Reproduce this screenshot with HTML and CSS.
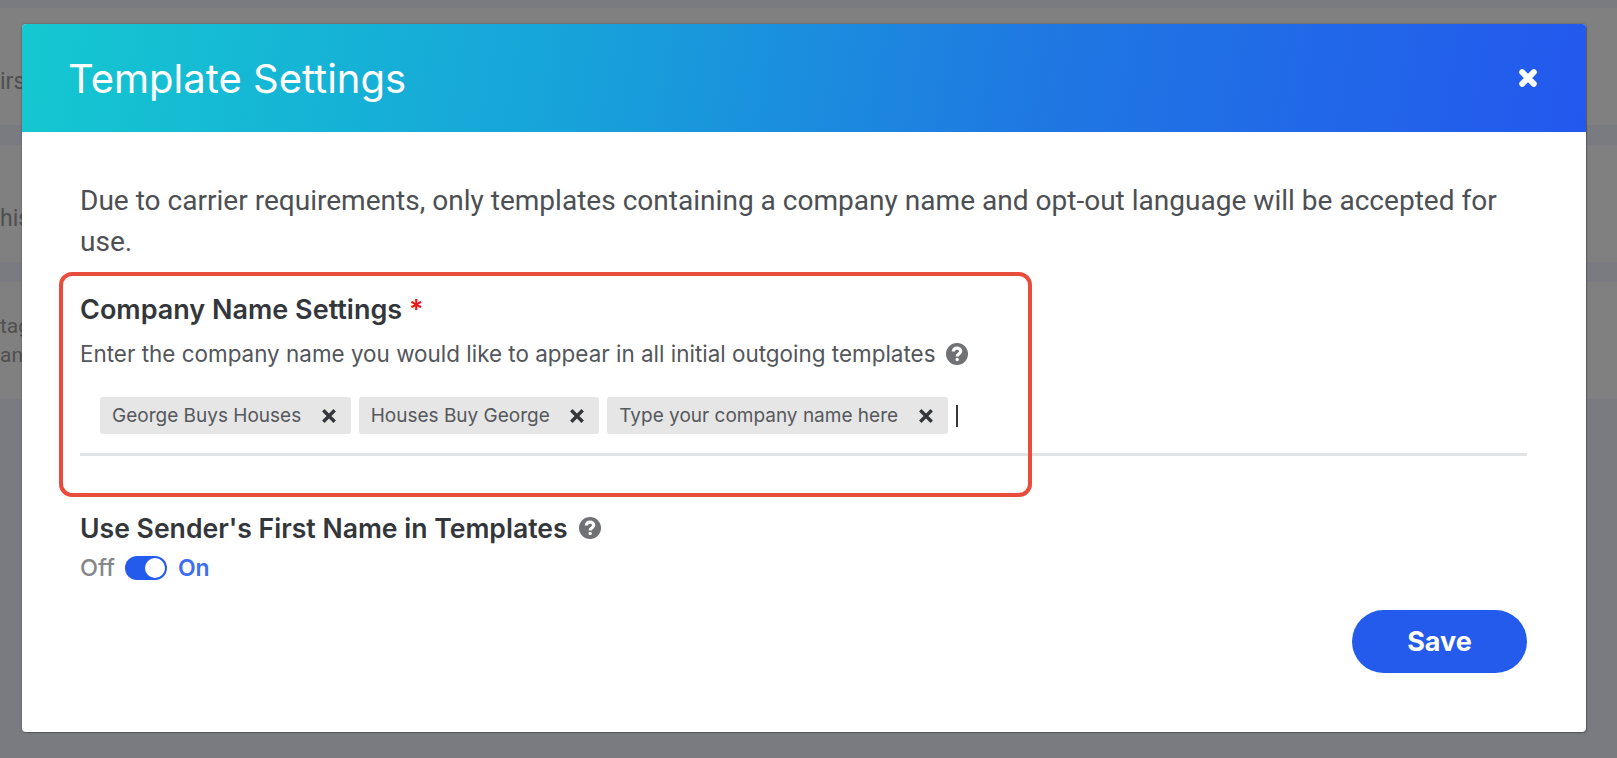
FILE: index.html
```html
<!DOCTYPE html>
<html lang="en">
<head>
<meta charset="utf-8">
<title>Template Settings</title>
<link rel="stylesheet" href="styles.css">
</head>
<body>
<div class="backdrop">
  <div class="bg-row bg-row-low"><span class="bg-text">irs</span></div>
  <div class="bg-row bg-row-low"><span class="bg-text">his</span></div>
  <div class="bg-row"><span class="bg-text bg-text-small">tag<br>any</span></div>
</div>
<div class="modal">
  <header class="modal-head">
    <h1 class="modal-title">Template Settings</h1>
    <svg class="close" viewBox="0 0 20 20" aria-label="Close"><path d="M3.500 3.500 16.500 16.500M16.500 3.500 3.500 16.500" /></svg>
  </header>
  <div class="modal-body">
    <p class="intro">Due to carrier requirements, only templates containing a company name and opt-out language will be accepted for use.</p>
    <section class="company">
      <h2 class="label">Company Name Settings <span class="req">*</span></h2>
      <p class="hint">Enter the company name you would like to appear in all initial outgoing templates
        <svg class="help help-small" viewBox="0 0 24 24"><circle cx="12" cy="12" r="12"/><path class="q" d="M8 9.2C8 6.8 9.8 5.6 12 5.6s4 1.300 4 3.400c0 3-3.800 3-3.800 5.600"/><circle class="dot" cx="12.200" cy="18" r="1.800"/></svg>
      </p>
      <div class="tags">
        <span class="tag">George Buys Houses<svg class="tag-x" viewBox="0 0 14 14"><path d="M2 2 12 12M12 2 2 12"/></svg></span>
        <span class="tag">Houses Buy George<svg class="tag-x" viewBox="0 0 14 14"><path d="M2 2 12 12M12 2 2 12"/></svg></span>
        <span class="tag">Type your company name here<svg class="tag-x" viewBox="0 0 14 14"><path d="M2 2 12 12M12 2 2 12"/></svg></span>
        <span class="caret"></span>
      </div>
    </section>
    <section class="sender">
      <h2 class="label label-row">Use Sender's First Name in Templates
        <svg class="help" viewBox="0 0 24 24"><circle cx="12" cy="12" r="12"/><path class="q" d="M8 9.2C8 6.8 9.8 5.6 12 5.6s4 1.300 4 3.400c0 3-3.800 3-3.800 5.600"/><circle class="dot" cx="12.200" cy="18" r="1.800"/></svg>
      </h2>
      <div class="toggle-row">
        <span class="off">Off</span>
        <span class="toggle"><span class="knob"></span></span>
        <span class="on">On</span>
      </div>
    </section>
    <div class="actions"><button class="save">Save</button></div>
  </div>
  <div class="highlight"></div>
</div>
</body>
</html>
```
FILE: styles.css
```css
* { box-sizing: border-box; }
html, body { margin: 0; height: 100%; }
body { background: #7a7b80; overflow: hidden; font-family: Inter, "Liberation Sans", sans-serif; }

.backdrop { padding-top: 8px; height: 758px; display: flex; flex-direction: column; gap: 20px; }
.bg-row { height: 117px; background: #808080; display: flex; align-items: center; overflow: hidden; flex: none; }
.bg-row-low { padding-top: 30px; }
.bg-text { font: 23px/29px Roboto, sans-serif; color: #4f4f4f; white-space: nowrap; }
.bg-text-small { font-size: 21px; }

.modal { position: absolute; left: 22px; top: 24px; width: 1564px; height: 708px; background: #fff; border-radius: 4px; box-shadow: 0 0 2px rgba(40,40,40,.6), 1px 1px 1px rgba(60,60,60,.4); }
.modal-head { height: 108px; padding: 0 49px 0 46px; border-radius: 4px 4px 0 0; background: linear-gradient(100deg, #14c8d0 0%, #17a3da 35%, #1f78e2 65%, #2358ee 100%); display: flex; align-items: center; justify-content: space-between; }
.modal-title { margin: 0; font-size: 40px; font-weight: 400; color: #fff; }
.close { width: 18px; height: 18px; fill: none; stroke: #fff; stroke-width: 6.500; stroke-linecap: round; }

.modal-body { padding: 48px 59px 0 58px; }
.intro { margin: 0; font: 28.060px/41px Roboto, sans-serif; color: #4c4f54; }
.company { padding-top: 31px; }
.label { margin: 0; font-size: 27px; font-weight: 600; color: #33363b; line-height: 34px; }
.req { color: #f01414; }
.hint { margin: 12px 0 0; font-size: 22.450px; line-height: 30px; color: #53565a; display: flex; align-items: center; gap: 10px; }
.help { width: 22px; height: 22px; fill: #6f7175; flex: none; }
.help .q { fill: none; stroke: #fff; stroke-width: 3.600; }
.help .dot { fill: #fff; }
.tags { margin-top: 28px; padding: 0 20px 19px; border-bottom: 3px solid #e2e3e4; display: flex; align-items: center; gap: 8px; }
.tag { height: 37px; padding: 0 14px 0 12px; background: #e6e6e6; border-radius: 3px; display: inline-flex; align-items: center; font-size: 19px; color: #55585c; }
.tag-x { width: 16px; height: 16px; margin-left: 19.500px; fill: none; stroke: #33363b; stroke-width: 3; }
.caret { width: 2px; height: 22px; background: #33363b; }
.sender { margin-top: 55px; }
.label-row { display: flex; align-items: center; gap: 11px; font-size: 26.600px; }
.toggle-row { margin-top: 8px; display: flex; align-items: center; gap: 10px; font-size: 23.500px; font-weight: 500; }
.off { color: #85878a; }
.on { color: #3b6ff0; font-weight: 600; font-size: 23px; margin-left: 1px; }
.toggle { width: 42px; height: 24px; border-radius: 12px; background: #245bec; padding: 2px; display: flex; justify-content: flex-end; }
.knob { width: 20px; height: 20px; border-radius: 50%; background: #fff; }
.actions { display: flex; justify-content: flex-end; margin-top: 28px; }
.save { width: 175px; height: 63px; border: 0; border-radius: 32px; background: #245bec; color: #fff; font: 700 27px Inter, sans-serif; }

.highlight { position: absolute; left: 37px; top: 248px; width: 973px; height: 225px; border: 4px solid #e74c3c; border-radius: 13px; pointer-events: none; }
```
